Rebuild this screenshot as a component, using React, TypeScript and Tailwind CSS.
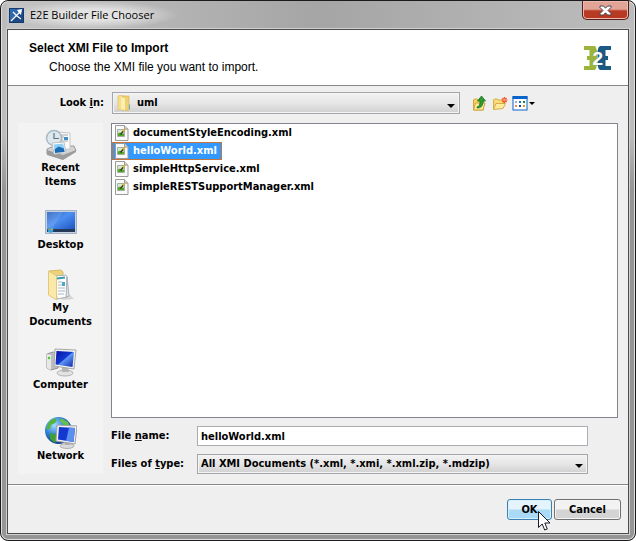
import React, { useState } from 'react';

const files = [
  'documentStyleEncoding.xml',
  'helloWorld.xml',
  'simpleHttpService.xml',
  'simpleRESTSupportManager.xml',
];

function AppIcon() {
  return (
    <svg width="15" height="15" viewBox="0 0 15 15" aria-hidden="true">
      <rect width="15" height="15" fill="#1d4a86" />
      <path d="M0 0h15L0 15z" fill="#2f68ad" />
      <path d="M.5 .5h14v14H.5z" fill="none" stroke="#163a6c" />
      <path d="M2 13L12 3M4 4l4 4 4 3" stroke="#fff" strokeWidth="1.2" fill="none" />
      <path d="M8 2l5-1-1 6-2-2z" fill="#fff" />
    </svg>
  );
}

function BrandLogo() {
  return (
    <svg width="27" height="24" viewBox="0 0 27 24" role="img" aria-label="E2E">
      <path d="M0 0h11l1 1.500L13 5v14l-1 3.500L11 24H0v-4h5.500v-6H3v-4h2.500V4H0z" fill="#9cb43c" />
      <path d="M27 0H16l-1.500 1.500L13.500 5v14l1 3.500L16 24h11v-4h-5.500v-6H24v-4h-2.500V4H27z" fill="#1b5a82" />
      <text x="8.500" y="19" fontSize="19" fontWeight="700" fontFamily="Liberation Sans, sans-serif" fill="#fff">2</text>
    </svg>
  );
}

function FolderIcon() {
  return (
    <svg width="16" height="16" viewBox="0 0 16 16" aria-hidden="true">
      <path d="M2 1l5-1v14l-5 1z" fill="#f6df86" stroke="#dcb95a" strokeWidth=".6" />
      <path d="M7 1h6v14l-6 1z" fill="#f0d170" stroke="#d5b04c" strokeWidth=".6" />
      <path d="M5 2l4 1v12.500l-4-1.500z" fill="#fbeeb2" />
      <path d="M13 9l1 1v4l-1 1z" fill="#5fa8d8" />
    </svg>
  );
}

function UpFolderIcon() {
  return (
    <svg width="16" height="16" viewBox="0 0 16 16" aria-hidden="true">
      <path d="M1.500 5l1-1h3l1 1h5v10h-10z" fill="#f5d368" stroke="#d2a436" />
      <path d="M1.500 15l2-7H13l-2 7z" fill="#fdec9e" stroke="#d2a436" />
      <path d="M5 12c2.500-.5 3-2.500 3-6H5.500L9.500 1l4 5H11c0 5-2 7-6 7z" fill="#2f9c34" stroke="#17711d" strokeWidth=".8" />
    </svg>
  );
}

function NewFolderIcon() {
  return (
    <svg width="16" height="16" viewBox="0 0 16 16" aria-hidden="true">
      <path d="M1.500 14V5l1-1h3l1 1h5v4" fill="#f8dc7a" stroke="#d8ab45" />
      <path d="M1.500 14.500l2.500-6h9.500l-2.500 5z" fill="#fdec9e" stroke="#d8ab45" />
      <path d="M12.500 2v6M9.500 5h6M10.500 3l4 4M14.500 3l-4 4" stroke="#ee4a22" strokeWidth="1.200" />
      <circle cx="12.500" cy="5" r="1.400" fill="#ff9a6e" />
    </svg>
  );
}

function ViewIcon() {
  return (
    <svg width="23" height="16" viewBox="0 0 23 16" aria-hidden="true">
      <rect x="1" y="2" width="14" height="13" fill="#fff" stroke="#0a64cc" />
      <path d="M.5 1h15v3H.5z" fill="#0a64cc" />
      <path d="M3 6h2v2H3z" fill="#b4a4c4" />
      <path d="M7 6h2v2H7z" fill="#2c6cd0" />
      <path d="M11 6h2v2h-2z" fill="#109020" />
      <path d="M3 10h2v2H3z" fill="#f08060" />
      <path d="M7 10h2v2H7z" fill="#123f9c" />
      <path d="M11 10h2v2h-2z" fill="#c8a010" />
      <path d="M17 7h6l-3 3z" fill="#000" />
    </svg>
  );
}

function FileIcon() {
  return (
    <svg width="14" height="16" viewBox="0 0 14 16" aria-hidden="true">
      <path d="M.5 .5h9l3.500 3.500v11.500H.5z" fill="#fafafa" stroke="#9a9a9a" />
      <path d="M9.500 .5V4H13" fill="#dcdcdc" stroke="#9a9a9a" />
      <path d="M2.500 4.500h7v7h-7z" fill="#d3ead0" stroke="#a4aea2" />
      <path d="M3 11V8.500l2-1 2 1.500 2-.5V11z" fill="#4fa628" />
      <path d="M5.500 9.500L8.500 6" stroke="#3c3410" strokeWidth="1.500" />
      <path d="M8 6.500L10.500 4" stroke="#e3b52c" strokeWidth="1.500" />
    </svg>
  );
}

function RecentIcon() {
  return (
    <svg width="32" height="32" viewBox="0 0 32 32" aria-hidden="true">
      <path d="M2 20l7-3h20l2 5-13 8L2 25z" fill="#d4d4d4" stroke="#9a9a9a" />
      <path d="M2 21l16 5 13-5v2l-13 8-16-5z" fill="#9c9c9c" />
      <path d="M13 3l12 1v16l-12 1z" fill="#fbfbfb" stroke="#c6c6c6" />
      <path d="M16 6h7M16 8h3M15 10h3M15 12h8" stroke="#a7a7a7" />
      <path d="M19 8h4v3h-4z" fill="#3d8fc6" />
      <circle cx="9" cy="9" r="7.500" fill="#dce8ee" stroke="#a9bac4" strokeWidth="1.500" />
      <path d="M9 4v5.500h5" fill="none" stroke="#5c7583" strokeWidth="1.200" />
      <path d="M7 14l12-1 2 11-12 1z" fill="#fff" stroke="#c0c0c0" />
      <path d="M8.500 15.500l9.500-1 1.500 5-10 1z" fill="#8fd0f4" />
      <path d="M9.500 20.500l4-3 5.500 2 .7 3.500-9.700 1z" fill="#1b6bb4" />
    </svg>
  );
}

function DesktopIcon() {
  return (
    <svg width="32" height="32" viewBox="0 0 32 32" aria-hidden="true">
      <defs>
        <linearGradient id="desk" x1="0" y1="0" x2="1" y2="1">
          <stop offset="0" stopColor="#2760bd" />
          <stop offset=".45" stopColor="#4d8ff0" />
          <stop offset="1" stopColor="#1d55c4" />
        </linearGradient>
      </defs>
      <path d="M.5 4.500h31v23H.5z" fill="#c6d2e0" stroke="#a3b1c4" />
      <path d="M2 6h28v17H2z" fill="url(#desk)" />
      <path d="M2 6h16L7 23H2z" fill="#fff" opacity=".12" />
      <path d="M2 23h28v3H2z" fill="#253a58" />
      <circle cx="5.500" cy="24" r="2.800" fill="#36a3de" />
      <path d="M4 24h1.500v-1.500H4z" fill="#ef6a30" />
      <path d="M6 24h1.500v-1.500H6z" fill="#93ce45" />
    </svg>
  );
}

function DocumentsIcon() {
  return (
    <svg width="32" height="32" viewBox="0 0 32 32" aria-hidden="true">
      <path d="M12 29l13-3 4 4-10 1z" fill="#000" opacity=".12" />
      <path d="M4 2l12-1 2 2v25l-6 1z" fill="#edd27a" stroke="#d9bb66" />
      <path d="M10 7l11-1 1 2v20l-10 2z" fill="#fff" stroke="#a8b1b8" />
      <path d="M22 8l-1 20 3-1z" fill="#dfe4e8" stroke="#a8b1b8" />
      <path d="M12 9.500l8-1" stroke="#369cae" strokeWidth="2" />
      <path d="M13 13h4M13 16h4M13 19h7M13 22h7M13 25h6" stroke="#a8b5c8" />
      <path d="M17 13h3v4h-3z" fill="#4aa9c5" />
      <path d="M3.500 2l8 5v24l-8-5z" fill="#fae9a8" stroke="#e3c878" />
    </svg>
  );
}

function ComputerIcon() {
  return (
    <svg width="32" height="32" viewBox="0 0 32 32" aria-hidden="true">
      <defs>
        <linearGradient id="pc" x1="0" y1="0" x2="1" y2="1">
          <stop offset="0" stopColor="#0512a0" />
          <stop offset=".48" stopColor="#1438d2" />
          <stop offset=".52" stopColor="#5f97f4" />
          <stop offset="1" stopColor="#0a24b4" />
        </linearGradient>
      </defs>
      <path d="M2 8l6-2 5 2v14l-7 2-4-2z" fill="#bdbdbd" stroke="#949494" />
      <path d="M2 8l4 1v15l-4-2z" fill="#e8e8e8" />
      <circle cx="4" cy="12" r="1.200" fill="#35ce20" />
      <ellipse cx="20" cy="27" rx="8" ry="3" fill="#e2e2e2" stroke="#b4b4b4" />
      <path d="M17 21h6l1 5h-7z" fill="#b4b4b4" />
      <path d="M10 3l21 1-2 19-20-3z" fill="#f1f1f1" stroke="#a8a8a8" />
      <path d="M11.500 5l17.500 1-1.500 15-17-2.500z" fill="url(#pc)" />
    </svg>
  );
}

function NetworkIcon() {
  return (
    <svg width="32" height="32" viewBox="0 0 32 32" aria-hidden="true">
      <defs>
        <radialGradient id="globe" cx=".35" cy=".3" r=".75">
          <stop offset="0" stopColor="#a8dcff" />
          <stop offset=".5" stopColor="#2d80d4" />
          <stop offset="1" stopColor="#0b3784" />
        </radialGradient>
      </defs>
      <circle cx="13.500" cy="13.500" r="13.500" fill="url(#globe)" />
      <path d="M4 5l5-4 3 2-2 3-4 2-1 4-4 0z" fill="#56b63c" />
      <path d="M16 1l7 4 2 5-6-2-4-4z" fill="#68bf4b" />
      <path d="M5 16l5 1 2 4-2 5-5-4z" fill="#3f9f32" />
      <ellipse cx="22" cy="29" rx="7" ry="2.500" fill="#dadada" stroke="#b0b0b0" />
      <path d="M20 24h5v4h-5z" fill="#b0b0b0" />
      <path d="M12 8l20 1-2 18-19-3z" fill="#f1f1f1" stroke="#a0a0a0" />
      <path d="M14 10l16 1-1.500 14-15.500-2.500z" fill="#1437cf" />
      <path d="M24 10.600l6 .4-1.500 14-7.500-1.200z" fill="#5b8ff0" />
    </svg>
  );
}

function Caret() {
  return (
    <svg width="8" height="4" viewBox="0 0 8 4" className="pointer-events-none absolute right-[5px] bottom-[6px]" aria-hidden="true">
      <path d="M0 0h8L4 4z" fill="#000" />
    </svg>
  );
}

const places = [
  { name: 'Recent Items', icon: <RecentIcon />, width: 'w-16' },
  { name: 'Desktop', icon: <DesktopIcon />, width: 'w-16' },
  { name: 'My Documents', icon: <DocumentsIcon />, width: 'w-20' },
  { name: 'Computer', icon: <ComputerIcon />, width: 'w-16' },
  { name: 'Network', icon: <NetworkIcon />, width: 'w-16' },
];

const selectStyle =
  'w-full appearance-none border border-[#a4a6ac] bg-linear-to-b from-[#f2f2f2] via-[#e6e6e6] to-[#d0d0d0] shadow-[inset_0_0_0_1px_#f4f4f4] outline-none';

export default function App() {
  const [selected, setSelected] = useState('helloWorld.xml');
  const [fileName, setFileName] = useState('helloWorld.xml');

  const pickFile = (name: string) => {
    setSelected(name);
    setFileName(name);
  };

  return (
    <div className="min-h-screen bg-white font-['DejaVu_Sans_Condensed','DejaVu_Sans',sans-serif] text-[11px] leading-[14px] font-bold text-black">
      <div className="flex min-h-screen flex-col rounded-lg border border-[#1c1a1c] bg-linear-to-b from-[#bcbcbc] from-25% to-[#969696] to-35% px-1.5 pb-1.5 shadow-[inset_0_0_0_1px_#dedede]">
        {/* Title bar */}
        <header className="flex h-7 items-start justify-between bg-linear-to-r from-[#c4c4c4] via-[#a5a5a5] via-50% to-[#bcbcbc]">
          <div className="flex h-7 items-center gap-1.5 bg-radial-[closest-side] from-[#e2e2e2] from-40% to-transparent pr-6 pl-0.5">
            <AppIcon />
            <h1 className="font-['Open_Sans',sans-serif] text-[11px] font-normal">E2E Builder File Chooser</h1>
          </div>
          <button
            type="button"
            aria-label="Close"
            className="flex h-[19px] w-[47px] items-center justify-center rounded-b-[5px] border border-t-0 border-[#54201c] bg-linear-to-b from-[#e2a497] from-45% to-[#b93a22] to-55% shadow-[inset_0_0_0_1px_#eeb9ae]"
          >
            <svg width="13" height="11" viewBox="0 0 13 11" aria-hidden="true">
              <path d="M1 1h3.500l2 2.200L8.500 1H12v1.500L9 5.500l3 3V10H8.500l-2-2.200L4.500 10H1V8.500l3-3-3-3z" fill="#fff" stroke="#4c4550" />
            </svg>
          </button>
        </header>

        <main className="flex flex-1 flex-col border border-[#4c4c4c] bg-[#efefef] shadow-[0_0_0_1px_#d0d0d0]">
          <section className="flex h-14 items-center justify-between border-b border-[#888] bg-white pr-[17px] pl-[21px] font-['Liberation_Sans',sans-serif] text-xs">
            <div className="self-start pt-2">
              <h2 className="leading-5">Select XMI File to Import</h2>
              <p className="pl-5 leading-[18px] font-normal">Choose the XMI file you want to import.</p>
            </div>
            <BrandLogo />
          </section>

          <section className="flex flex-1 flex-col px-2.5 pt-1.5 pb-2.5">
            <div className="flex items-center">
              <label htmlFor="look-in" className="w-[94px] pr-2 text-right">
                Look <span className="underline">i</span>n:
              </label>
              <div className="relative flex-1">
                <span className="pointer-events-none absolute top-[3px] left-1">
                  <FolderIcon />
                </span>
                <select id="look-in" className={`h-[22px] pl-6 ${selectStyle}`}>
                  <option>uml</option>
                </select>
                <Caret />
              </div>
              <div className="ml-3 flex w-[146px] gap-1">
                <button type="button" aria-label="Up one level"><UpFolderIcon /></button>
                <button type="button" aria-label="Create new folder"><NewFolderIcon /></button>
                <button type="button" aria-label="View menu"><ViewIcon /></button>
              </div>
            </div>

            <div className="mt-[9px] flex flex-1 gap-2">
              {/* Places bar */}
              <nav className="flex w-[85px] shrink-0 flex-col items-center gap-[17px] bg-[#f3f3f3] pt-1.5">
                {places.map((place) => (
                  <button key={place.name} type="button" className={`flex flex-col items-center last:mt-2 ${place.width}`}>
                    {place.icon}
                    <span>{place.name}</span>
                  </button>
                ))}
              </nav>

              <div className="flex flex-1 flex-col">
                <div role="listbox" aria-label="Files" className="flex flex-1 flex-col items-start border border-[#82858f] bg-white">
                  {files.map((name) => (
                    <button
                      key={name}
                      type="button"
                      role="option"
                      aria-selected={selected === name}
                      onClick={() => pickFile(name)}
                      className={`flex h-[18px] items-center gap-1 border pr-1 pl-0.5 ${
                        selected === name ? 'border-[#c2763e] bg-[#3399ff] text-white' : 'border-transparent'
                      }`}
                    >
                      <FileIcon />
                      {name}
                    </button>
                  ))}
                </div>

                {/* File name and filter */}
                <div className="mt-2 mr-[30px] grid grid-cols-[86px_1fr] items-center gap-y-2">
                  <label htmlFor="file-name">
                    File <span className="underline">n</span>ame:
                  </label>
                  <input
                    id="file-name"
                    type="text"
                    value={fileName}
                    onChange={(e) => setFileName(e.target.value)}
                    className="h-5 w-full border border-[#abadb3] bg-white px-[3px] outline-none"
                  />
                  <label htmlFor="file-type">
                    Files of <span className="underline">t</span>ype:
                  </label>
                  <div className="relative">
                    <select id="file-type" className={`block h-5 pl-[3px] ${selectStyle}`}>
                      <option>All XMI Documents (*.xml, *.xmi, *.xml.zip, *.mdzip)</option>
                    </select>
                    <Caret />
                  </div>
                </div>
              </div>
            </div>
          </section>

          <footer className="flex h-[49px] items-start justify-end gap-0.5 border-t border-[#888] pt-3.5 pr-[7px] shadow-[inset_0_1px_0_#fff]">
            <button
              type="button"
              className="relative h-[21px] w-[45px] rounded-[3px] border border-[#3c7fb1] bg-linear-to-b from-[#e5f4fc] from-45% to-[#a9dbf6] to-55% shadow-[inset_0_0_0_1px_#d8f0fb]"
            >
              OK
              <svg width="13" height="20" viewBox="0 0 13 20" className="absolute top-[11px] left-[30px]" aria-hidden="true">
                <path d="M.5 .5v16l3.700-3.500 2.500 6 2.600-1-2.500-6h5.200z" fill="#fff" stroke="#1a1a2a" />
              </svg>
            </button>
            <button
              type="button"
              className="h-[21px] w-[67px] rounded-[3px] border border-[#707070] bg-linear-to-b from-[#f2f2f2] from-45% to-[#d4d4d4] to-55% shadow-[inset_0_0_0_1px_#f5f5f5]"
            >
              Cancel
            </button>
          </footer>
        </main>
      </div>
    </div>
  );
}
